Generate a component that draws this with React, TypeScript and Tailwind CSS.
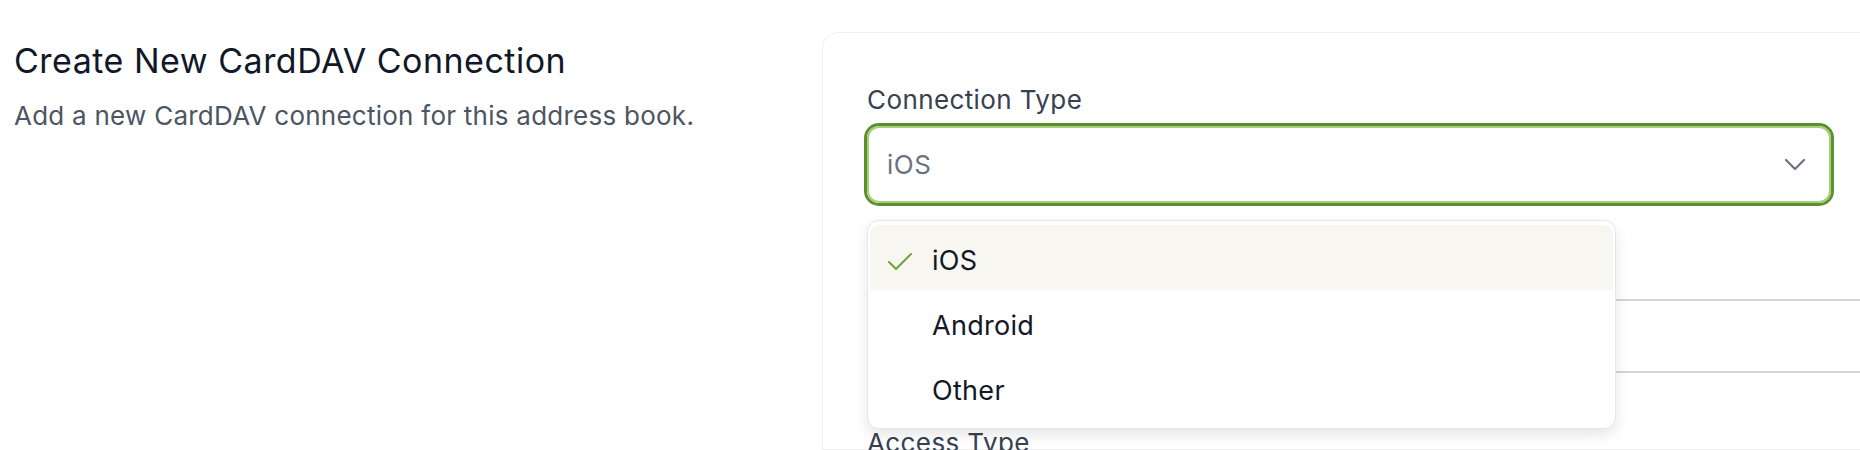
import React from "react";

const font = { fontFamily: "Inter, 'Noto Sans', sans-serif" };

function Chevron() {
  return (
    <svg width="22" height="13" viewBox="0 0 22 13" fill="none">
      <polyline points="2,2 11,11 20,2" stroke="#6b7280" strokeWidth="2.2" strokeLinecap="round" strokeLinejoin="round" />
    </svg>
  );
}

function Check() {
  return (
    <svg width="26" height="19" viewBox="0 0 26 19" fill="none">
      <polyline points="2,10 9,17 24,2" stroke="#6da33f" strokeWidth="2" strokeLinecap="round" strokeLinejoin="round" />
    </svg>
  );
}

export default function App() {
  const items = ["iOS", "Android", "Other"];
  return (
    <div className="w-[1860px] h-[450px] overflow-hidden bg-white flex" style={font}>
      <div className="w-[822px] shrink-0 pl-[14px] pt-[41px]">
        <h2 className="text-[34px] leading-[40px] tracking-[0.5px] font-normal text-[#111827]">Create New CardDAV Connection</h2>
        <p className="mt-[18px] text-[26px] leading-[34px] tracking-[0.25px] text-[#4b5563]">
          Add a new CardDAV connection for this address book.
        </p>
      </div>
      <div className="mt-[32px] w-[1200px] shrink-0 rounded-tl-[16px] border border-[#f0f0f0] bg-white pl-[44px] pt-[51px]">
        <div className="w-[964px] flex flex-col">
          <div className="relative flex flex-col">
            <label className="text-[26px] leading-[32px] tracking-[0.4px] font-normal text-[#374151]">Connection Type</label>
            <div className="mt-[10px] h-[77px] rounded-[12px] border-2 border-[#a6cf7c] shadow-[0_0_0_3px_#5d8f2f] flex items-center justify-between pl-[18px] pr-[23px]">
              <span className="text-[26px] tracking-[0.5px] text-[#6b7280]">iOS</span>
              <Chevron />
            </div>
            <div className="absolute left-0 top-[136px] w-[749px] rounded-[12px] border border-[#e5e7eb] bg-white pt-[4px] pb-[8px] px-[2px] shadow-[0_6px_14px_rgba(0,0,0,0.10)] z-10">
              {items.map((it, i) => (
                <div
                  key={it}
                  className={`relative h-[65px] flex items-center pt-[8px] pl-[62px] text-[27px] tracking-[0.3px] text-[#111827] ${i === 0 ? "bg-[#f8f6f1] rounded-t-[9px]" : ""}`}
                >
                  {i === 0 && (
                    <span className="absolute left-[17px] top-[27px]">
                      <Check />
                    </span>
                  )}
                  {it}
                </div>
              ))}
            </div>
          </div>
          <div className="mt-[52px] flex flex-col">
            <div className="h-[32px]" />
            <div className="mt-[12px] h-[74px] w-[1200px] rounded-[12px] border-2 border-[#d4d4d4] bg-white" />
          </div>
          <div className="mt-[54px] flex flex-col">
            <label className="text-[26px] leading-[32px] tracking-[0.4px] font-normal text-[#374151]">Access Type</label>
          </div>
        </div>
      </div>
    </div>
  );
}
